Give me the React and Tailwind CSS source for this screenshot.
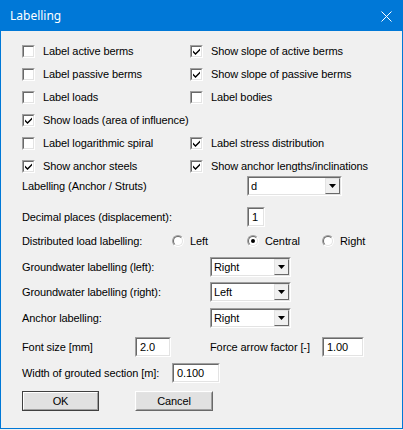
import { Fragment, useState } from 'react';

const font = "font-['Liberation_Sans',Arial,sans-serif] text-[11px] leading-none tracking-[-0.1px] text-black";

// classic sunken 3D frame used by edits, combos and check boxes
function Sunken({ className = '', children }) {
  return (
    <div className={`border border-t-[#a0a0a0] border-l-[#a0a0a0] border-b-white border-r-white ${className}`}>
      <div className="w-full h-full border border-t-[#696969] border-l-[#696969] border-b-[#e3e3e3] border-r-[#e3e3e3] bg-white flex items-center">
        {children}
      </div>
    </div>
  );
}

function CheckBox({ checked, label }) {
  return (
    <div className="flex items-center h-[23px]">
      <Sunken className="w-[13px] h-[13px] shrink-0">
        {checked && (
          <svg width="9" height="9" viewBox="0 0 9 9" className="block">
            <path d="M1 3.5 L3.5 6 L8 1.5 L8 3.5 L3.5 8 L1 5.5 Z" fill="#000" />
          </svg>
        )}
      </Sunken>
      <span className="ml-[8px] whitespace-nowrap">{label}</span>
    </div>
  );
}

function Radio({ checked, label }) {
  return (
    <div className="flex items-center w-[75px]">
      <div className="w-[12px] h-[12px] rounded-full border border-t-[#a0a0a0] border-l-[#a0a0a0] border-b-white border-r-white shrink-0">
        <div className="w-full h-full rounded-full border border-t-[#696969] border-l-[#696969] border-b-[#e3e3e3] border-r-[#e3e3e3] bg-white flex items-center justify-center">
          {checked && <div className="w-[4px] h-[4px] rounded-full bg-black" />}
        </div>
      </div>
      <span className="ml-[6px]">{label}</span>
    </div>
  );
}

function Combo({ value, className = '' }) {
  return (
    <Sunken className={`h-[20px] ${className}`}>
      <span className="flex-1 pl-[2px]">{value}</span>
      <div className="w-[15px] h-full border border-t-[#e3e3e3] border-l-[#e3e3e3] border-b-[#696969] border-r-[#696969] bg-[#f0f0f0] flex items-center justify-center">
        <svg width="7" height="4" viewBox="0 0 7 4" className="block">
          <path d="M0 0 H7 L3.5 4 Z" fill="#000" />
        </svg>
      </div>
    </Sunken>
  );
}

function Edit({ value, className = '' }) {
  return (
    <Sunken className={`h-[20px] ${className}`}>
      <span className="pl-[3px]">{value}</span>
    </Sunken>
  );
}

function Button({ children, isDefault, className = '' }) {
  return (
    <div className={`h-[20px] ${isDefault ? 'border border-[#404040]' : 'border border-t-white border-l-white border-b-[#696969] border-r-[#696969]'} ${className}`}>
      <div className={`w-full h-full flex items-center justify-center bg-[#e1e1e1] ${isDefault ? 'border border-t-white border-l-white border-b-[#a0a0a0] border-r-[#a0a0a0]' : 'border border-b-[#a0a0a0] border-r-[#a0a0a0] border-t-[#e3e3e3] border-l-[#e3e3e3]'}`}>
        {children}
      </div>
    </div>
  );
}

const boxes = [
  ['Label active berms', false, 'Show slope of active berms', true],
  ['Label passive berms', false, 'Show slope of passive berms', true],
  ['Label loads', false, 'Label bodies', false],
  ['Show loads (area of influence)', true, null, false],
  ['Label logarithmic spiral', false, 'Label stress distribution', true],
  ['Show anchor steels', true, 'Show anchor lengths/inclinations', true],
];

export default function App() {
  const [dist] = useState('Central');

  return (
    <div className="w-[403px] h-[430px] bg-[#f0f0f0]">
      <div className={`w-[403px] h-[429px] border border-[#0078d7] bg-[#f0f0f0] flex flex-col ${font}`}>
        {/* Title bar */}
        <div className="h-[30px] bg-[#0078d7] flex items-center justify-between pl-[9px] pr-[10px] shrink-0">
          <span className="font-['Noto_Sans',sans-serif] text-[12px] tracking-normal text-white">Labelling</span>
          <svg width="11" height="11" viewBox="0 0 11 11" className="block">
            <path d="M0.5 0.5 L10.5 10.5 M10.5 0.5 L0.5 10.5" stroke="#fff" strokeWidth="1" />
          </svg>
        </div>

        <div className="pl-[21px] flex flex-col">
          {/* Option check boxes */}
          <div className="mt-[9px] grid grid-cols-[168px_1fr]">
            {boxes.map(([l1, c1, l2, c2]) => (
              <Fragment key={l1}>
                <CheckBox label={l1} checked={c1} />
                {l2 ? <CheckBox label={l2} checked={c2} /> : <div />}
              </Fragment>
            ))}
          </div>

          <div className="mt-[-2px] h-[20px] flex items-center">
            <span className="w-[225px]">Labelling (Anchor / Struts)</span>
            <Combo value="d" className="w-[95px]" />
          </div>

          <div className="mt-[11px] h-[20px] flex items-center">
            <span className="w-[225px]">Decimal places (displacement):</span>
            <Edit value="1" className="w-[18px]" />
          </div>

          <div className="mt-[4px] h-[20px] flex items-center">
            <span className="w-[150px]">Distributed load labelling:</span>
            {['Left', 'Central', 'Right'].map((o) => (
              <Radio key={o} label={o} checked={dist === o} />
            ))}
          </div>

          <div className="mt-[6px] h-[20px] flex items-center">
            <span className="w-[188px]">Groundwater labelling (left):</span>
            <Combo value="Right" className="w-[81px]" />
          </div>
          <div className="mt-[5px] h-[20px] flex items-center">
            <span className="w-[188px]">Groundwater labelling (right):</span>
            <Combo value="Left" className="w-[81px]" />
          </div>
          <div className="mt-[6px] h-[20px] flex items-center">
            <span className="w-[188px]">Anchor labelling:</span>
            <Combo value="Right" className="w-[81px]" />
          </div>

          <div className="mt-[9px] h-[20px] flex items-center">
            <span className="w-[113px]">Font size [mm]</span>
            <Edit value="2.0" className="w-[36px]" />
            <span className="ml-[39px] w-[112px]">Force arrow factor [-]</span>
            <Edit value="1.00" className="w-[42px]" />
          </div>

          <div className="mt-[6px] h-[20px] flex items-center">
            <span className="w-[150px]">Width of grouted section [m]:</span>
            <Edit value="0.100" className="w-[48px]" />
          </div>

          <div className="mt-[8px] flex">
            <Button isDefault className="w-[77px]">OK</Button>
            <Button className="ml-[36px] w-[78px]">Cancel</Button>
          </div>
        </div>
      </div>
    </div>
  );
}
